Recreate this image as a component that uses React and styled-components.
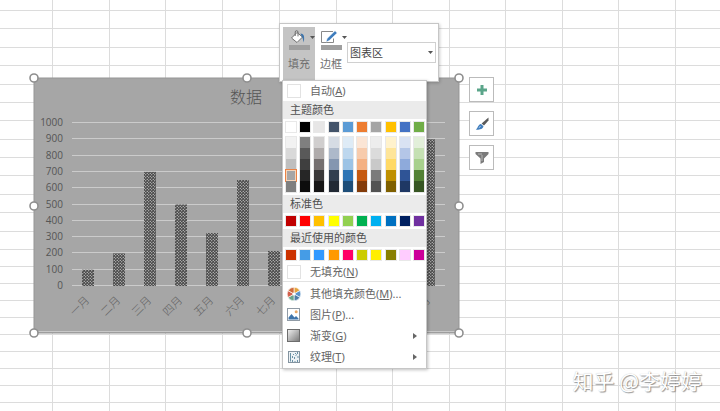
import React from "react";
import styled, { createGlobalStyle } from "styled-components";

const columnWidths = [53, 57, 56, 57, 57, 57, 56, 57, 56, 57, 56, 57];
const rowHeights = [
  11, 18, 19, 18, 19, 18, 18, 19, 18, 18, 19, 18, 19, 18, 17, 17, 17, 17, 17,
  17, 17, 17, 17, 17,
];

const months = [
  { label: "一月", value: 100 },
  { label: "二月", value: 200 },
  { label: "三月", value: 700 },
  { label: "四月", value: 500 },
  { label: "五月", value: 325 },
  { label: "六月", value: 650 },
  { label: "七月", value: 215 },
  { label: "八月", value: 400 },
  { label: "九月", value: 600 },
  { label: "十月", value: 300 },
  { label: "十一月", value: 800 },
  { label: "十二月", value: 900 },
];

const themeColors = [
  { base: "#ffffff", shades: ["#f2f2f2", "#d9d9d9", "#bfbfbf", "#a6a6a6", "#7f7f7f"] },
  { base: "#000000", shades: ["#7f7f7f", "#595959", "#3f3f3f", "#262626", "#0d0d0d"] },
  { base: "#e7e6e6", shades: ["#d0cece", "#afabab", "#757070", "#3a3838", "#171616"] },
  { base: "#44546a", shades: ["#d6dce4", "#adb9ca", "#8496b0", "#323f4f", "#222a35"] },
  { base: "#5b9bd5", shades: ["#deebf6", "#bdd7ee", "#9cc3e5", "#2e75b5", "#1e4e79"] },
  { base: "#ed7d31", shades: ["#fbe5d5", "#f7cbac", "#f4b183", "#c55a11", "#833c0b"] },
  { base: "#a5a5a5", shades: ["#ededed", "#dbdbdb", "#c9c9c9", "#7b7b7b", "#525252"] },
  { base: "#ffc000", shades: ["#fff2cc", "#fee599", "#ffd965", "#bf9000", "#7f6000"] },
  { base: "#4472c4", shades: ["#d9e2f3", "#b4c6e7", "#8eaadb", "#2f5496", "#1f3864"] },
  { base: "#70ad47", shades: ["#e2efd9", "#c5e0b3", "#a8d08d", "#538135", "#375623"] },
];

const standardColors = [
  "#c00000", "#ff0000", "#ffc000", "#ffff00", "#92d050",
  "#00b050", "#00b0f0", "#0070c0", "#002060", "#7030a0",
];

const recentColors = [
  "#cc3300", "#459ce6", "#3399ff", "#ff9900", "#ff0066",
  "#cccc00", "#ffee00", "#888000", "#ffccff", "#cc0099",
];

const SELECTED_COLOR = "#a6a6a6";

const Worksheet = () => (
  <Sheet aria-hidden="true">
    {rowHeights.map((height, row) => (
      <SheetRow key={row} $height={height}>
        {columnWidths.map((width, column) => (
          <Cell key={column} $width={width} />
        ))}
      </SheetRow>
    ))}
  </Sheet>
);

const Chart = () => {
  const zero = 207;
  const scale = 0.163;
  const handles = [
    [0, 0], [213, 0], [425, 0], [0, 128],
    [425, 128], [0, 255], [213, 255], [425, 255],
  ];

  return (
    <ChartArea viewBox="0 0 425 255" role="img" aria-label="数据">
      <defs>
        <pattern id="dots" width="3" height="3" patternUnits="userSpaceOnUse">
          <rect width="3" height="3" fill="#4a4a4a" />
          <circle cx="0.75" cy="0.75" r="0.6" fill="#f4f4f4" />
          <circle cx="2.25" cy="2.25" r="0.6" fill="#f4f4f4" />
        </pattern>
      </defs>
      <rect width="425" height="255" fill="#a6a6a6" stroke="#959595" />
      <path d="M1 253.5H424" stroke="#c8c8c8" />
      <ChartTitle x="212" y="25">数据</ChartTitle>
      {[0, 100, 200, 300, 400, 500, 600, 700, 800, 900, 1000].map((tick) => (
        <g key={tick}>
          <path
            d={`M38 ${Math.round(zero - tick * scale) + 0.5}H411`}
            stroke="#cbcbcb"
          />
          <AxisValue x="29" y={Math.round(zero - tick * scale) + 4}>
            {tick}
          </AxisValue>
        </g>
      ))}
      {months.map(({ label, value }, index) => (
        <g key={label}>
          <rect
            x={48 + index * 31}
            y={zero + 1 - value * scale}
            width="12"
            height={value * scale}
            fill="url(#dots)"
          />
          <MonthLabel
            transform={`translate(${56 + index * 31} 223) rotate(-45)`}
          >
            {label}
          </MonthLabel>
        </g>
      ))}
      {handles.map(([x, y]) => (
        <circle
          key={`${x}-${y}`}
          cx={x}
          cy={y}
          r="4"
          fill="#fff"
          stroke="#8f8f8f"
          strokeWidth="1.6"
        />
      ))}
    </ChartArea>
  );
};

const PlusIcon = () => (
  <svg width="12" height="12" viewBox="0 0 12 12">
    <path d="M6 1V11M1 6H11" stroke="#5ba58a" strokeWidth="3" />
  </svg>
);

const BrushIcon = () => (
  <svg width="14" height="14" viewBox="0 0 14 14">
    <path d="M13.5 0.5V3.5L9 8.6L6.6 6.4Z" fill="#5a5a5a" />
    <path d="M6 7L8.5 9.3C8.3 11.8 5 13.2 0.8 12.4C3 11.6 2.8 7.6 6 7Z" fill="#3f7dbd" />
    <path d="M3.8 10.6L5.6 9.4" stroke="#bcd4ee" />
  </svg>
);

const FilterIcon = () => (
  <svg width="14" height="14" viewBox="0 0 14 14">
    <path d="M0.5 1H13.5V3L9 7.5V11L5.5 13V7.5L0.5 3Z" fill="#7b7b7b" />
    <path d="M3 3H7M7 4V10" stroke="#b8b8b8" />
  </svg>
);

const BucketIcon = () => (
  <svg width="16" height="14" viewBox="0 0 16 14">
    <path d="M7 2.5L12.5 7L7 12.5L1.5 8Z" fill="#fff" stroke="#707070" />
    <path d="M5.2 6V2C5.2 0.2 8 0.2 8 2V6.4" fill="none" stroke="#707070" />
    <path d="M10.5 3.5C13.8 3.6 14.8 6 13.8 12.5C12.8 9.5 13 8 11.5 6.2Z" fill="#3f74aa" />
  </svg>
);

const PenIcon = () => (
  <svg width="18" height="14" viewBox="0 0 18 14">
    <path d="M13 1.5H1.5V12.5H13.5V8.5" fill="none" stroke="#888" />
    <path d="M15 0.8L17.2 3L9.2 10.6L6 12L7.2 8.4Z" fill="#3f7dbd" stroke="#fff" strokeWidth="0.5" />
  </svg>
);

const CaretIcon = () => (
  <svg width="5" height="3" viewBox="0 0 5 3">
    <path d="M0 0H5L2.5 3Z" fill="#555" />
  </svg>
);

const ColorWheelIcon = () => (
  <svg width="14" height="14" viewBox="-7 -7 14 14">
    {["#e5a23c", "#5b93c8", "#4f7da8", "#6aa58c", "#d25f4b", "#cf6a3b"].map(
      (color, index) => (
        <path
          key={color}
          d="M0 0V-6.8A6.8 6.8 0 0 1 5.89 -3.4Z"
          fill={color}
          stroke="#fff"
          strokeWidth="0.6"
          transform={`rotate(${index * 60})`}
        />
      )
    )}
    <circle r="1.5" fill="#fff" />
  </svg>
);

const PictureIcon = () => (
  <svg width="14" height="14" viewBox="0 0 14 14">
    <rect x="0.5" y="0.5" width="12" height="12" fill="#fff" stroke="#8f9aa5" />
    <path d="M1.5 11.5V9.5L4.5 6L7.5 9.5L9 8L11.5 10.5V11.5Z" fill="#3f74aa" />
    <circle cx="9.2" cy="3.8" r="1.5" fill="#e8a867" />
  </svg>
);

const GradientIcon = () => (
  <svg width="14" height="14" viewBox="0 0 14 14">
    <defs>
      <linearGradient id="shade" x1="0" y1="0" x2="1" y2="1">
        <stop offset="0" stopColor="#f2f2f2" />
        <stop offset="1" stopColor="#777" />
      </linearGradient>
    </defs>
    <rect x="0.5" y="0.5" width="12" height="12" fill="url(#shade)" stroke="#6d6d6d" />
  </svg>
);

const TextureIcon = () => (
  <svg width="14" height="14" viewBox="0 0 14 14">
    <rect x="1.5" y="1.5" width="11" height="11" fill="#edf2f5" stroke="#8494a0" />
    <path
      d="M3.5 3V11.5M5.5 6V8M5.5 10V12M8.5 3V4M7.5 7V9M8 11V12M10.5 2V4M11 6V8M10.5 10V12M6 4L7 5M8.5 5.5L10 4.5"
      stroke="#6b92a6"
    />
  </svg>
);

const ArrowIcon = () => (
  <svg width="4" height="6" viewBox="0 0 4 6">
    <path d="M0 0L4 3L0 6Z" fill="#666" />
  </svg>
);

const SwatchRow = ({ colors }) => (
  <Swatches>
    {colors.map((color) => (
      <Swatch key={color} type="button" aria-label={color} $color={color} />
    ))}
  </Swatches>
);

const FillMenu = () => (
  <Menu>
    <MenuItem type="button" $height={20}>
      <EmptyBox />
      <span>
        自动(<u>A</u>)
      </span>
    </MenuItem>
    <Heading>主题颜色</Heading>
    <SwatchRow colors={themeColors.map(({ base }) => base)} />
    <Palette>
      {themeColors.map(({ base, shades }) => (
        <Shades key={base}>
          {shades.map((shade) => (
            <Shade
              key={shade}
              type="button"
              aria-label={shade}
              $color={shade}
              $selected={shade === SELECTED_COLOR}
            />
          ))}
        </Shades>
      ))}
    </Palette>
    <Heading>标准色</Heading>
    <SwatchRow colors={standardColors} />
    <Heading>最近使用的颜色</Heading>
    <SwatchRow colors={recentColors} />
    <MenuItem type="button" $height={18}>
      <EmptyBox />
      <span>
        无填充(<u>N</u>)
      </span>
    </MenuItem>
    <Commands>
      <MenuItem type="button" $height={21}>
        <ColorWheelIcon />
        <span>
          其他填充颜色(<u>M</u>)...
        </span>
      </MenuItem>
      <MenuItem type="button" $height={21}>
        <PictureIcon />
        <span>
          图片(<u>P</u>)...
        </span>
      </MenuItem>
      <MenuItem type="button" $height={21}>
        <GradientIcon />
        <Grow>
          渐变(<u>G</u>)
        </Grow>
        <ArrowIcon />
      </MenuItem>
      <MenuItem type="button" $height={21}>
        <TextureIcon />
        <Grow>
          纹理(<u>T</u>)
        </Grow>
        <ArrowIcon />
      </MenuItem>
    </Commands>
  </Menu>
);

const MiniToolbar = () => (
  <Toolbar>
    <ToolButton type="button" $active>
      <ToolIcons>
        <BucketIcon />
        <CaretIcon />
      </ToolIcons>
      <ColorBar />
      填充
    </ToolButton>
    <ToolButton type="button">
      <ToolIcons>
        <PenIcon />
        <CaretIcon />
      </ToolIcons>
      <ColorBar />
      边框
    </ToolButton>
    <SelectBox>
      <Select aria-label="图表元素" defaultValue="area">
        <option value="area">图表区</option>
      </Select>
      <SelectCaret>
        <CaretIcon />
      </SelectCaret>
    </SelectBox>
  </Toolbar>
);

const App = () => (
  <Page>
    <GlobalStyle />
    <Worksheet />
    <ChartObject>
      <Chart />
      <SideButtons>
        <SideButton type="button" aria-label="图表元素">
          <PlusIcon />
        </SideButton>
        <SideButton type="button" aria-label="图表样式">
          <BrushIcon />
        </SideButton>
        <SideButton type="button" aria-label="图表筛选器">
          <FilterIcon />
        </SideButton>
      </SideButtons>
    </ChartObject>
    <Popup>
      <MiniToolbar />
      <FillMenu />
    </Popup>
    <Watermark>知乎 @李婷婷</Watermark>
  </Page>
);

export default App;

const GlobalStyle = createGlobalStyle`
  * {
    box-sizing: border-box;
  }

  body {
    margin: 0;
    background: #fff;
    color: #666;
    font-family: "Noto Sans", "Noto Sans CJK SC", sans-serif;
    font-size: 11px;
  }

  button {
    margin: 0;
    padding: 0;
    border: 0;
    background: none;
    color: inherit;
    font: inherit;
    cursor: pointer;
  }

  svg {
    display: block;
    flex-shrink: 0;
  }
`;

const Page = styled.main`
  position: relative;
  height: 100vh;
  overflow: hidden;
`;

const Sheet = styled.div`
  display: flex;
  flex-direction: column;
`;

const SheetRow = styled.div`
  display: flex;
  height: ${(props) => props.$height}px;
  border-bottom: 1px solid #dcdcdc;
`;

const Cell = styled.div`
  width: ${(props) => props.$width}px;
  flex-shrink: 0;
  border-right: 1px solid #dcdcdc;
`;

const ChartObject = styled.section`
  position: absolute;
  top: 78px;
  left: 34px;
  display: flex;
  gap: 10px;
`;

const ChartArea = styled.svg`
  width: 425px;
  height: 255px;
  overflow: visible;
`;

const ChartTitle = styled.text`
  fill: #555;
  font-family: "Noto Sans CJK SC", sans-serif;
  font-size: 16px;
  font-weight: 300;
  text-anchor: middle;
`;

const AxisValue = styled.text`
  fill: #555;
  font-family: "Open Sans", sans-serif;
  font-size: 10px;
  text-anchor: end;
`;

const MonthLabel = styled.text`
  fill: #606060;
  font-family: "Noto Sans CJK SC", sans-serif;
  font-size: 11px;
  font-weight: 300;
  text-anchor: end;
`;

const SideButtons = styled.div`
  display: flex;
  flex-direction: column;
  gap: 9px;
  margin-top: -1px;
`;

const SideButton = styled.button`
  display: flex;
  align-items: center;
  justify-content: center;
  width: 25px;
  height: 25px;
  border: 1px solid #bbb;
  background: #fff;
`;

const Popup = styled.div`
  position: absolute;
  top: 23px;
  left: 279px;
`;

const Toolbar = styled.div`
  display: flex;
  width: 160px;
  height: 59px;
  padding: 3px 2px 0 3px;
  border: 1px solid #c6c6c6;
  background: #fff;
  box-shadow: 1px 1px 3px rgba(0, 0, 0, 0.2);
`;

const ToolButton = styled.button`
  display: flex;
  flex-direction: column;
  align-items: center;
  width: 32px;
  padding-top: 3px;
  background: ${(props) => (props.$active ? "#c4c4c4" : "transparent")};
  color: #707070;
  line-height: 16px;
`;

const ToolIcons = styled.div`
  display: flex;
  align-items: center;
  align-self: flex-end;
  gap: 4px;
`;

const ColorBar = styled.div`
  width: 21px;
  height: 5px;
  margin: 1px 0 6px;
  background: #9f9f9f;
`;

const SelectBox = styled.div`
  position: relative;
  flex: 1;
  height: 21px;
  margin-top: 15px;
`;

const Select = styled.select`
  width: 100%;
  height: 100%;
  padding: 0 2px;
  border: 1px solid #d0d0d0;
  border-radius: 0;
  background: #fff;
  color: #444;
  font: inherit;
  appearance: none;
`;

const SelectCaret = styled.span`
  position: absolute;
  top: 9px;
  right: 3px;
  pointer-events: none;
`;

const Menu = styled.div`
  position: relative;
  width: 145px;
  margin: -2px 0 0 3px;
  padding-bottom: 1px;
  border: 1px solid #c6c6c6;
  background: #fff;
  box-shadow: 1px 1px 3px rgba(0, 0, 0, 0.25);
`;

const MenuItem = styled.button`
  display: flex;
  align-items: center;
  gap: 9px;
  width: 100%;
  height: ${(props) => props.$height}px;
  padding: 0 9px 0 4px;
  line-height: 16px;
  text-align: left;
  white-space: nowrap;
`;

const Grow = styled.span`
  flex: 1;
`;

const EmptyBox = styled.span`
  width: 14px;
  height: 14px;
  border: 1px solid #e2e2e2;
  background: #fff;
`;

const Heading = styled.div`
  height: 18px;
  padding-left: 7px;
  background: #ebebeb;
  color: #505050;
  line-height: 18px;
`;

const Swatches = styled.div`
  display: flex;
  justify-content: space-between;
  padding: 3px 2px 3px 3px;
`;

const Swatch = styled.button`
  width: 10px;
  height: 10px;
  background: ${(props) => props.$color};
  box-shadow: 0 0 0 1px #e8e8e8;
`;

const Palette = styled.div`
  display: flex;
  justify-content: space-between;
  padding: 2px 2px 3px 3px;
`;

const Shades = styled.div`
  display: flex;
  flex-direction: column;
  width: 10px;
  box-shadow: 0 0 0 1px #e8e8e8;
`;

const Shade = styled.button`
  height: 11px;
  background: ${(props) => props.$color};
  outline: ${(props) => (props.$selected ? "1px solid #e98245" : "none")};
  box-shadow: ${(props) => (props.$selected ? "inset 0 0 0 1px #f5d5ba" : "none")};
`;

const Commands = styled.div`
  padding-top: 1px;
  border-top: 1px solid #e2e2e2;
`;

const Watermark = styled.div`
  position: absolute;
  right: 18px;
  bottom: 16px;
  color: #fff;
  font-family: "Noto Sans CJK SC", sans-serif;
  font-size: 21px;
  line-height: 30px;
  text-shadow: 1px 1px 1px rgba(0, 0, 0, 0.4), 0 0 1px rgba(0, 0, 0, 0.25);
`;
